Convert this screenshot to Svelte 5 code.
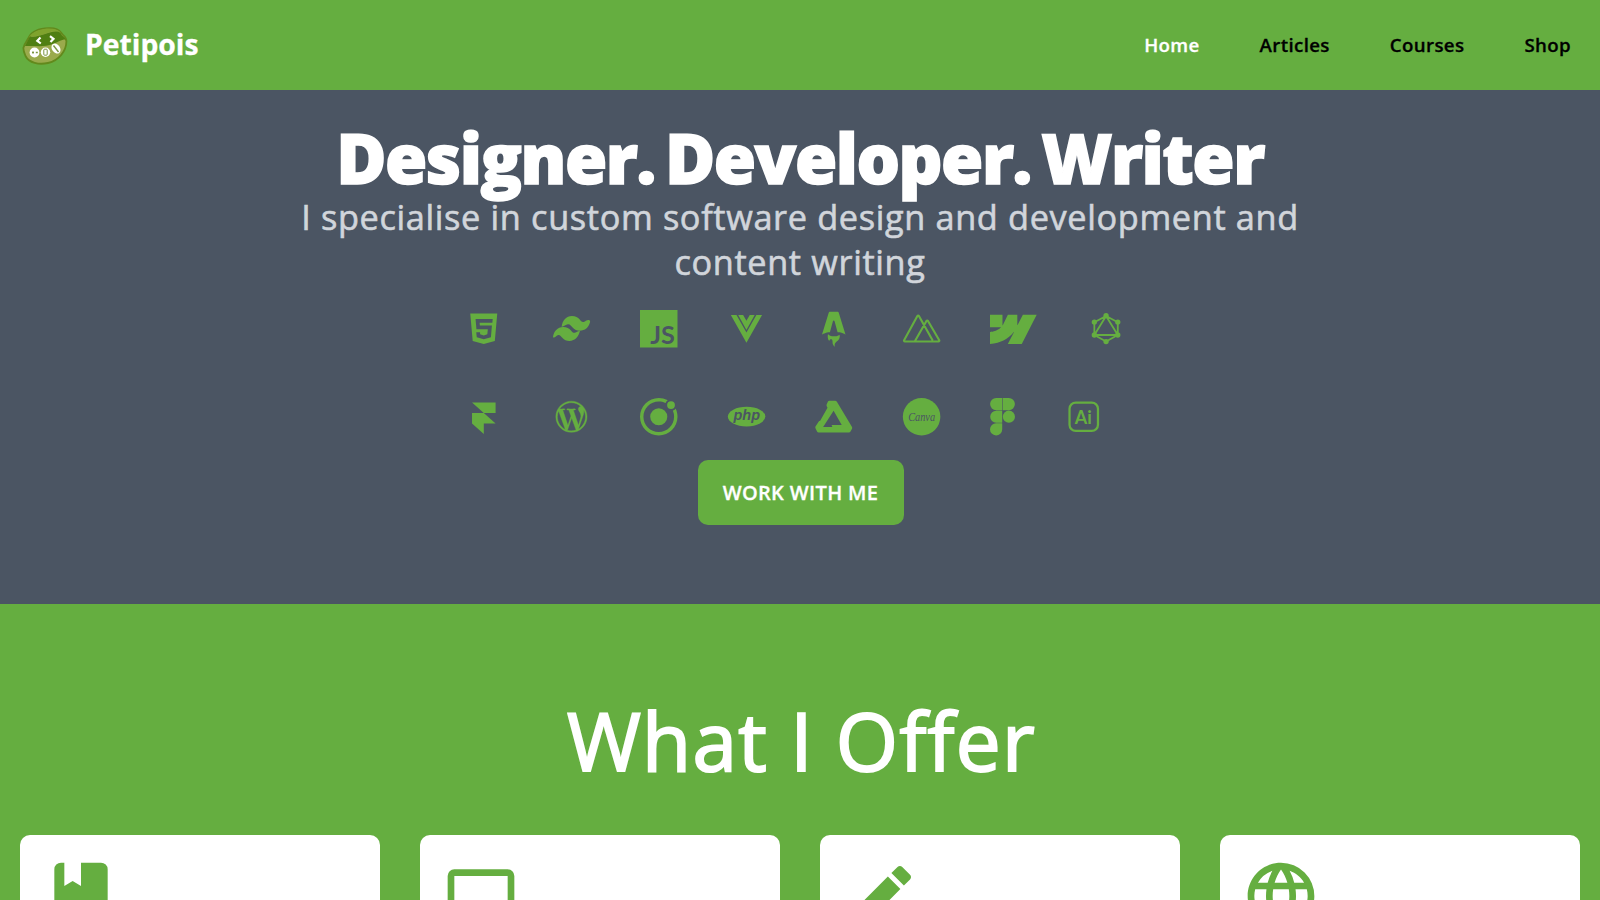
<script>
  const links = ['Home', 'Articles', 'Courses', 'Shop'];
</script>

<header>
  <a class="brand" href="#top">
    <svg class="bean" viewBox="0 0 48 40" aria-hidden="true">
      <path d="M2.500 20.500C4 15.500 6.500 13 8 10 11 4 20 1.500 28 1.200 34 1 38 2.500 40 5.500 41.500 8.500 45.500 9 45.400 14.500 45.300 24 38 33.500 27 36 18 38 8 36 4.500 29 3.200 26 2 23 2.500 20.500z" fill="#9aaa4c" stroke="#62891c" stroke-width="1.800" />
      <path d="M8 10C12 3.500 22 1.500 28 1.500 34 1.500 38 3 40 6 33 2.800 28 5.500 22 7.500 16 9.500 11 9 8 10z" fill="#7fa32d" />
      <path d="M4 19C6.500 14 8 11 9 9.500 14 10.500 19 8.500 24 7 31 4.500 36 3.500 39.500 6 40.500 9 44 10 44.500 12.500 40 12.500 37 15 32 17 23 20.500 14 18.500 4 19z" fill="#4f7f12" />
      <path d="M19.500 10.500l-3.200 3.300 3.500 2.700M29 9.200l3.500 2.600-3 3.300" fill="none" stroke="#fff" stroke-width="2.200" />
      <g fill="#fff"><circle cx="13.500" cy="25.500" r="4.900" /><circle cx="24.500" cy="25.200" r="4.700" /><ellipse cx="35" cy="21.500" rx="4" ry="5.500" transform="rotate(-35 35 21.500)" /></g>
      <path d="M11 25.500h2M12 24.500v2M14.800 25.500h2" stroke="#7a9440" stroke-width="1.300" />
      <rect x="22.800" y="22.200" width="3.400" height="6" rx=".8" fill="none" stroke="#7a9440" stroke-width="1" />
      <path d="M32.500 18.500l5 6.500" stroke="#7a9440" stroke-width="1.400" />
    </svg>
    <span>Petipois</span>
  </a>
  <nav>
    {#each links as link, i}
      <a href="#{link}" class:active={i === 0}>{link}</a>
    {/each}
  </nav>
</header>

<section class="hero">
  <h1>Designer. Developer. Writer</h1>
  <p>I specialise in custom software design and development and content writing</p>

  <div class="tools">
    <div class="row">
      <svg viewBox="0 0 24 24"><g transform="translate(12 12) scale(1.090) translate(-12 -12)"><path d="M4.070 3h15.860L18.500 19.200 12 21l-6.500-1.800zM7.200 6.300l.5 6h6.700l-.3 3-2.100.6-2.100-.6-.1-1.300H7.600l.3 3L12 18.200l4.200-1.200.6-6.900H9.700l-.15-1.600h7.500l.2-2.200z" fill-rule="evenodd" /></g></svg>
      <svg viewBox="0 0 24 24"><path d="M5.500 10.700C6.100 6.500 8.500 3.800 12.100 3.800c2.400 0 3.800.8 5 2.300.8 1 1.300 1.700 2.500 1.500 1.200-.2 1.800-1.300 3.200-1.200.9.100 1.100.7.900 1.400-.9 3.300-3.200 5.400-6.600 5.400-2 0-3.200-.7-4.400-1.900-1.100-1.100-1.600-2.100-3-2.200-1.700-.1-2.500 1.700-4.200 1.600zM0 17.200C.5 13.600 2.900 10.800 6.500 10.800c2.400 0 3.800.9 5 2.300.9 1 1.300 1.700 2.500 1.500 1.300-.2 1.800-1.300 3.200-1.100-.7 3.500-3 6.300-6.700 6.300-2 0-3.300-.8-4.400-1.900-1-1-1.500-2-2.700-1.900-1.300.1-1.500 1.500-2.700 1.600-.4 0-.7-.1-.7-.4z" /></svg>
      <svg viewBox="0 0 24 24"><path d="M0 0h24v24H0z" /><text class="cut js" x="6.500" y="22" textLength="15.800" lengthAdjust="spacingAndGlyphs">JS</text></svg>
      <svg viewBox="0 0 24 24"><g transform="translate(11.800 12.050) scale(.909 .93) translate(-12 -12.500)"><path d="M1 3h4l7 12 7-12h4L12 22 1 3zm5.200 0h3.467L12 7l2.333-4H17.800L12 13.300 6.200 3z" /></g></svg>
      <svg viewBox="0 0 24 24"><g transform="translate(2.550 1.100) scale(.787 .933)"><path d="M8.358 20.162c-1.186-1.070-1.532-3.316-1.038-4.944.856 1.026 2.043 1.352 3.272 1.535 1.897.283 3.760.177 5.522-.678.202-.098.388-.229.608-.36.166.473.209.95.151 1.437-.14 1.185-.738 2.100-1.688 2.794-.38.277-.782.525-1.175.787-1.205.804-1.531 1.747-1.078 3.119l.044.148a3.158 3.158 0 0 1-1.407-1.188 3.310 3.310 0 0 1-.544-1.815c-.004-.32-.004-.642-.048-.958-.106-.769-.472-1.113-1.161-1.133-.707-.02-1.267.411-1.415 1.090-.012.053-.028.104-.045.165zM2.397 15.717s3.240-1.575 6.490-1.575l2.451-7.565c.092-.366.36-.614.662-.614.302 0 .57.248.662.614l2.450 7.565c3.850 0 6.491 1.575 6.491 1.575L16.088.727C15.930.285 15.663 0 15.303 0H8.697c-.36 0-.615.285-.784.727z" /></g></svg>
      <svg viewBox="0 0 24 24"><path class="line" stroke-width="1.350" d="M7.500 20.200H1.200a.6.6 0 0 1-.5-.9L9.200 3.900a.6.6 0 0 1 1 0L19 19.500M7.500 20.200h15.200a.6.6 0 0 0 .5-.9L16 7a.6.6 0 0 0-1 0z" /></svg>
      <svg class="wide" viewBox="0 0 24 19.280"><path d="M24 2.500l-7.658 14.970H9.149l3.205-6.204h-.144C9.566 14.698 5.621 16.958 0 17.470v-6.118s3.596-.213 5.710-2.435H0V2.500h6.417v5.278l.144-.001L9.183 2.500h4.854v5.244h.144L16.901 2.500z" /></svg>
      <svg viewBox="0 0 24 24"><path class="line" stroke-width="1.150" d="M12.200 3.800l7.500 4v8.200l-7.500 4.200-7.500-4.200V7.800zM12.200 3.800L4.700 16h15z" /><circle cx="12.200" cy="3.600" r="1.700" /><circle cx="19.700" cy="7.700" r="1.700" /><circle cx="19.700" cy="16" r="1.700" /><circle cx="12.200" cy="20.200" r="1.700" /><circle cx="4.700" cy="16" r="1.700" /><circle cx="4.700" cy="7.700" r="1.700" /></svg>
    </div>
    <div class="row">
      <svg viewBox="0 0 24 24"><g transform="translate(.720 2.900) scale(.943 .842)"><path d="M4 0h16v8h-8zM4 8h8l8 8H4zM4 16h8v8z" /></g></svg>
      <svg viewBox="0 0 24 24"><g transform="translate(1.800 2) scale(.8333)"><path stroke="#65ae40" stroke-width=".3" d="M21.469 6.825c.84 1.537 1.318 3.300 1.318 5.175 0 3.979-2.156 7.456-5.363 9.325l3.295-9.527c.615-1.540.82-2.771.82-3.864 0-.405-.026-.78-.07-1.110m-7.981.105c.647-.03 1.232-.105 1.232-.105.582-.075.514-.93-.067-.899 0 0-1.755.135-2.880.135-1.064 0-2.850-.15-2.850-.15-.585-.03-.661.855-.075.885 0 0 .54.061 1.125.09l1.680 4.605-2.370 7.080L5.354 6.900c.649-.03 1.234-.1 1.234-.1.585-.075.516-.93-.065-.896 0 0-1.746.138-2.874.138-.2 0-.438-.008-.69-.015C4.911 3.150 8.235 1.215 12 1.215c2.809 0 5.365 1.072 7.286 2.833-.046-.003-.091-.009-.141-.009-1.060 0-1.812.923-1.812 1.914 0 .89.513 1.643 1.060 2.531.411.72.89 1.643.89 2.977 0 .915-.354 1.994-.821 3.479l-1.075 3.585-3.900-11.610.001.014zM12 22.784c-1.059 0-2.081-.153-3.048-.437l3.237-9.406 3.315 9.087c.024.053.05.101.078.149-1.120.393-2.325.609-3.582.609M1.211 12c0-1.564.336-3.050.935-4.390L7.290 21.709C3.694 19.960 1.212 16.271 1.211 12M12 0C5.385 0 0 5.385 0 12s5.385 12 12 12 12-5.385 12-12S18.615 0 12 0" /></g></svg>
      <svg viewBox="0 0 24 24"><path d="M22.922 7.027l-.103-.23-.169.188c-.408.464-.928.82-1.505 1.036l-.159.061.066.155a9.745 9.745 0 0 1 .75 3.759c0 5.405-4.397 9.806-9.806 9.806-5.409 0-9.802-4.397-9.802-9.802 0-5.405 4.402-9.806 9.806-9.806 1.467 0 2.883.319 4.200.947l.155.075.066-.155a3.767 3.767 0 0 1 1.106-1.453l.197-.159-.225-.117A11.905 11.905 0 0 0 12.001.001c-6.619 0-12 5.381-12 12s5.381 12 12 12 12-5.381 12-12c0-1.730-.361-3.403-1.078-4.973z" /><circle cx="12" cy="12" r="5.470" /><circle cx="19.850" cy="4.523" r="2.494" /></svg>
      <svg viewBox="0 0 24 24"><ellipse cx="11.900" cy="11.900" rx="12" ry="6.300" /><text class="cut php" x="3.500" y="14" textLength="17" lengthAdjust="spacingAndGlyphs">php</text></svg>
      <svg viewBox="0 0 24 24"><path fill-rule="evenodd" d="M9.100 1.700h3.700q.8 0 1.200.7l9.600 16q.4.600.1 1.200l-1 1.900q-.3.600-1 .6H2.300q-.7 0-1-.6L.3 19.300q-.3-.6 0-1.100l2-3q.3-.6 1-.6L8 6.300 7.500 5.200Q7.200 4.600 7.500 4L8.300 2.300q.3-.6.8-.6zM11.900 8.200L5.200 18.600h5.900l-.5-1.300h6.500z" /></svg>
      <svg viewBox="0 0 24 24"><circle cx="11.900" cy="12" r="12" /><text class="cut canva" x="3.300" y="14.500" textLength="17.200" lengthAdjust="spacingAndGlyphs">Canva</text></svg>
      <svg class="narrow" viewBox="0 0 25 37.500"><path d="M6.200 0h6v12.200h-6a6.100 6.100 0 0 1 0-12.200zM12.800 0h6a6.100 6.100 0 0 1 0 12.200h-6zM6.200 12.700h6v12h-6a6 6 0 0 1 0-12zM6.200 25.200h6v6.200a6.100 6.100 0 1 1-6-6.200z" /><circle cx="18.900" cy="18.700" r="6.100" /></svg>
      <svg viewBox="0 0 24 24"><rect class="line" x="2.900" y="2.900" width="18.200" height="18.200" rx="4" stroke-width="1.450" /><text class="ai" x="6.300" y="16.400" textLength="10.900" lengthAdjust="spacingAndGlyphs">Ai</text></svg>
    </div>
  </div>

  <a class="cta" href="#contact">WORK WITH ME</a>
</section>

<section class="offer">
  <h2>What I Offer</h2>
  <div class="cards">
    <article><svg viewBox="0 0 24 24"><path d="M18 22a2 2 0 0 0 2-2V4a2 2 0 0 0-2-2h-6v7L9.500 7.500 7 9V2H6a2 2 0 0 0-2 2v16a2 2 0 0 0 2 2h12z" /></svg></article>
    <article><svg viewBox="0 0 24 24"><path d="M4 6h16v10H4m16 2a2 2 0 0 0 2-2V6a2 2 0 0 0-2-2H4a2 2 0 0 0-2 2v10a2 2 0 0 0 2 2H0v2h24v-2h-4z" /></svg></article>
    <article><svg viewBox="0 0 24 24"><path d="M20.710 7.040c.39-.39.39-1.040 0-1.410l-2.340-2.340c-.37-.39-1.020-.39-1.410 0l-1.840 1.830 3.750 3.750M3 17.250V21h3.750L17.810 9.930l-3.750-3.750L3 17.250z" /></svg></article>
    <article><svg viewBox="0 0 24 24"><path d="M16.360 14c.08-.66.14-1.320.14-2 0-.68-.06-1.340-.14-2h3.380c.16.64.26 1.310.26 2s-.1 1.360-.26 2m-5.150 5.560c.6-1.110 1.060-2.310 1.380-3.560h2.950a8.030 8.030 0 0 1-4.330 3.560M14.340 14H9.660c-.1-.66-.16-1.320-.16-2 0-.68.06-1.350.16-2h4.680c.09.65.16 1.320.16 2 0 .68-.07 1.340-.16 2M12 19.960c-.83-1.200-1.500-2.530-1.910-3.960h3.820c-.41 1.430-1.080 2.760-1.910 3.960M8 8H5.080A7.923 7.923 0 0 1 9.400 4.440C8.800 5.550 8.350 6.750 8 8m-2.920 8H8c.35 1.250.8 2.450 1.400 3.560A8.008 8.008 0 0 1 5.080 16m-.82-2C4.100 13.360 4 12.690 4 12s.1-1.360.26-2h3.380c-.08.66-.14 1.320-.14 2 0 .68.06 1.340.14 2M12 4.030c.83 1.200 1.500 2.540 1.910 3.970h-3.820c.41-1.430 1.080-2.770 1.910-3.970M18.920 8h-2.950a15.650 15.650 0 0 0-1.380-3.560c1.840.63 3.370 1.900 4.330 3.560M12 2C6.470 2 2 6.500 2 12a10 10 0 0 0 10 10 10 10 0 0 0 10-10A10 10 0 0 0 12 2z" /></svg></article>
  </div>
</section>

<style>
  :global(body) {
    background: #65ae40;
    font-family: 'Open Sans', 'Noto Sans', sans-serif;
  }
  a { color: inherit; text-decoration: none; }
  header {
    box-sizing: border-box;
    height: 90px;
    padding: 0 29px 0 21px;
    display: flex;
    align-items: center;
    justify-content: space-between;
    background: #65ae40;
  }
  .brand { display: flex; align-items: center; gap: 16px; color: #fff; font-size: 28.300px; font-weight: 700; line-height: 36px; -webkit-text-stroke: .3px #fff; }
  .brand span { padding-bottom: 2px; }
  .bean { width: 48px; height: 40px; padding-top: 4px; }
  nav { display: flex; gap: 60px; padding-bottom: 1px; font-size: 18.700px; font-weight: 600; letter-spacing: .350px; color: #000; -webkit-text-stroke: .3px; }
  .active { color: #fff; }

  .hero {
    box-sizing: border-box;
    height: 514px;
    padding-top: 30px;
    background: #4b5563;
    display: flex;
    flex-direction: column;
    align-items: center;
  }
  h1 {
    margin: 0;
    font-size: 68.500px;
    font-weight: 800;
    line-height: 75px;
    letter-spacing: -1.500px;
    word-spacing: -6px;
    color: #fff;
    white-space: nowrap;
    -webkit-text-stroke: 1.500px #fff;
  }
  p {
    width: 1020px;
    margin: -1px 0 26px;
    font-size: 34.300px;
    line-height: 45px;
    letter-spacing: .640px;
    text-align: center;
    color: #d1d5db;
    -webkit-text-stroke: .6px #d1d5db;
  }
  .tools { width: 670px; display: grid; gap: 50.500px; }
  .row { display: flex; gap: 50px; }
  .row svg { width: 37.500px; height: 37.500px; flex: none; fill: #65ae40; overflow: visible; }
  .row .wide { width: 46.700px; }
  .row .narrow { width: 25px; }
  .row .line { fill: none; stroke: #65ae40; stroke-linejoin: round; }
  .row .cut { fill: #4b5563; }
  .js { font: 700 15.800px Lato, sans-serif; }
  .php { font: italic 700 9.500px 'Liberation Sans', sans-serif; }
  .canva { font: italic 400 8.300px/1 'Liberation Serif', serif; }
  .ai { font: 700 12px Lato, sans-serif; }
  .cta {
    box-sizing: border-box;
    width: 206px;
    height: 65px;
    margin: 24.500px 0 0 1px;
    border-radius: 10px;
    background: #65ae40;
    color: #fff;
    font-size: 20px;
    font-weight: 600;
    line-height: 65px;
    letter-spacing: .350px;
    text-align: center;
    -webkit-text-stroke: .3px #fff;
  }

  .offer { box-sizing: border-box; height: 296px; overflow: hidden; padding: 86px 20px 0; }
  h2 {
    margin: 0 0 45px;
    padding-left: 3px;
    font-size: 80px;
    font-weight: 400;
    line-height: 100px;
    letter-spacing: 1.300px;
    text-align: center;
    color: #fff;
    -webkit-text-stroke: 2px #fff;
  }
  .cards { display: grid; grid-template-columns: repeat(4, 1fr); gap: 40px; }
  article {
    box-sizing: border-box;
    height: 80px;
    padding: 21.300px 21.300px 0;
    border-radius: 10px 10px 0 0;
    background: #fff;
  }
  article svg { display: block; width: 80px; height: 80px; fill: #65ae40; }
</style>
